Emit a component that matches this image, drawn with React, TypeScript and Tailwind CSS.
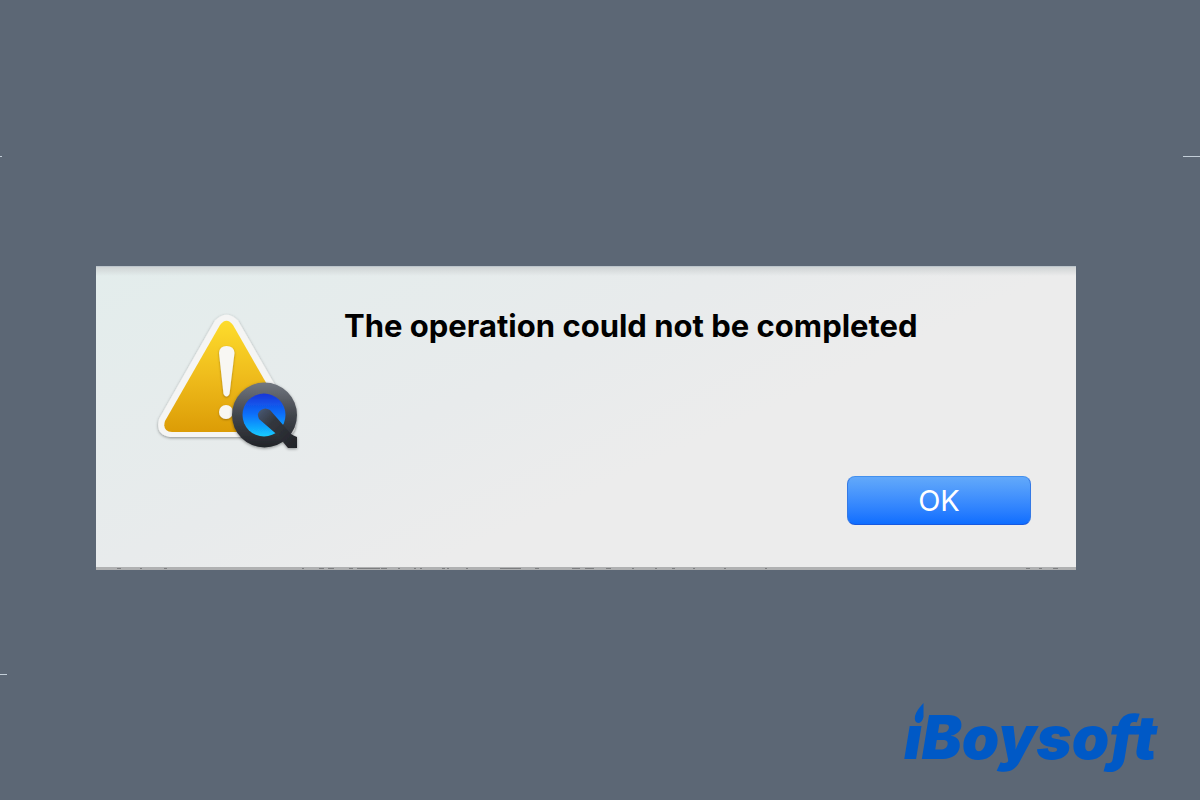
import { useState } from "react";

// dark specks along the bottom edge of the dialog: [x, width]
const specks = [
  [21, 4],
  [44, 2],
  [68, 3],
  [206, 2],
  [223, 5],
  [232, 6],
  [253, 4],
  [261, 23],
  [285, 6],
  [302, 2],
  [318, 2],
  [324, 2],
  [346, 3],
  [351, 2],
  [370, 2],
  [404, 21],
  [439, 4],
  [476, 8],
  [489, 9],
  [510, 5],
  [536, 2],
  [559, 2],
  [576, 3],
  [597, 2],
  [628, 2],
  [669, 2],
  [930, 4],
  [943, 3],
  [957, 5],
];

function WarningIcon() {
  return (
    <svg viewBox="0 0 150 150" className="h-[150px] w-[150px] shrink-0" role="img" aria-label="QuickTime warning">
      <defs>
        <linearGradient id="yellow" x1="0" y1="0" x2="0" y2="1">
          <stop offset="0" stopColor="#fddc2c" />
          <stop offset="0.5" stopColor="#efbc1c" />
          <stop offset="1" stopColor="#dc9c06" />
        </linearGradient>
        <linearGradient id="ring" x1="0" y1="0" x2="0" y2="1">
          <stop offset="0" stopColor="#727780" />
          <stop offset="0.5" stopColor="#41454c" />
          <stop offset="1" stopColor="#222429" />
        </linearGradient>
        <linearGradient id="lens" x1="0" y1="0" x2="0" y2="1">
          <stop offset="0" stopColor="#1a35d8" />
          <stop offset="0.5" stopColor="#0b72fb" />
          <stop offset="1" stopColor="#14ccff" />
        </linearGradient>
        <linearGradient id="hand" x1="0" y1="0" x2="1" y2="1">
          <stop offset="0" stopColor="#4a5b77" />
          <stop offset="0.35" stopColor="#33373e" />
          <stop offset="1" stopColor="#222327" />
        </linearGradient>
        <filter id="shadow" x="-10%" y="-10%" width="120%" height="120%">
          <feDropShadow dx="0" dy="1" stdDeviation="1.5" floodColor="#000" floodOpacity="0.4" />
        </filter>
        <filter id="soft" x="-30%" y="-10%" width="160%" height="120%">
          <feDropShadow dx="0" dy="1" stdDeviation="1" floodColor="#7a5200" floodOpacity="0.6" />
        </filter>
      </defs>
      <path
        d="M65 13.500Q76.500 2 88 13.500L144 111Q149 128 133 130L20 130Q5 128 9 112Z"
        fill="#f5f5f4"
        filter="url(#shadow)"
        transform="translate(0 2)"
      />
      <path
        d="M70 18Q76.500 9.500 83 18L138 114Q140 124 130 125L22 125Q12 124 15 114Z"
        fill="url(#yellow)"
        transform="translate(0 2)"
      />
      <g fill="#f8f7f3" filter="url(#soft)">
        <path d="M69 48Q69.500 41 76.500 41Q84 41 84.500 48L79.500 89Q76.500 94 73.500 89Z" />
        <circle cx="76" cy="107" r="7" />
      </g>
      <g filter="url(#shadow)">
        <circle cx="114.500" cy="110" r="32.500" fill="url(#ring)" />
        <circle cx="114" cy="110" r="21.500" fill="url(#lens)" />
        <path d="M109 114Q106 108 111 105Q115 102 120 105L141 129Q144 131 147 132V143H138L133 137Q134 134 131 133Z" fill="url(#hand)" />
      </g>
    </svg>
  );
}

function Logo() {
  return (
    <a
      href="#"
      aria-label="iBoysoft"
      className="relative block font-['Inter'] text-[60px] leading-[60px] font-black text-[#0059c6] italic"
    >
      ıBoysoft
      <svg viewBox="0 0 12 20" className="absolute -top-1 left-2.5 h-5 w-3" aria-hidden="true">
        <path d="M9.500 0L9.500 14Q8 20 4 20Q0 19 1 13Q2 8 9.500 0Z" fill="currentColor" />
      </svg>
    </a>
  );
}

export default function App() {
  const [open, setOpen] = useState(true);

  return (
    <main className="flex min-h-screen flex-col bg-[#5c6775] font-['Inter','Liberation_Sans',sans-serif]">
      <div className="flex justify-between pt-[156px]">
        <span className="h-px w-0.5 bg-[#c3ced8]" />
        <span className="h-px w-[17px] bg-[#c3ced8]" />
      </div>

      <div className="min-h-[413px] pt-[109px] pr-[124px] pl-24">
        {open && (
          <section
            role="alertdialog"
            aria-labelledby="message"
            className="border-t border-t-[#bcc5cb] bg-[linear-gradient(to_bottom,#cdd1d2,transparent_10px),linear-gradient(155deg,#e3edec_0%,#e8ebec_40%,#ececec_60%)] bg-origin-border"
          >
            <div className="flex gap-11 pt-[38px] pl-[54px]">
              <WarningIcon />
              <h1 id="message" className="pt-[3px] text-[31px] leading-9 font-bold text-black">
                The operation could not be completed
              </h1>
            </div>
            <div className="flex justify-end pt-[21px] pr-[45px] pb-[42px]">
              <button
                type="button"
                onClick={() => setOpen(false)}
                className="h-[49px] w-[184px] rounded-lg border border-t-[#4390ee] border-r-[#3479e5] border-b-[#1759df] border-l-[#3479e5] bg-linear-to-b from-[#64aafa] to-[#0a6cff] bg-origin-border text-[29px] leading-8 text-white"
              >
                OK
              </button>
            </div>
            <svg viewBox="0 0 980 3" preserveAspectRatio="none" className="block h-[3px] w-full" aria-hidden="true">
              <rect width="980" height="3" fill="#b0b1b2" />
              {specks.map(([x, width]) => (
                <rect key={x} x={x} y="1" width={width} height="1" fill="#7d7e80" />
              ))}
            </svg>
          </section>
        )}
      </div>

      <div className="flex pt-[104px]">
        <span className="h-px w-[7px] bg-[#c3ced8]" />
      </div>

      <footer className="flex justify-end pt-8 pr-[43px]">
        <Logo />
      </footer>
    </main>
  );
}
